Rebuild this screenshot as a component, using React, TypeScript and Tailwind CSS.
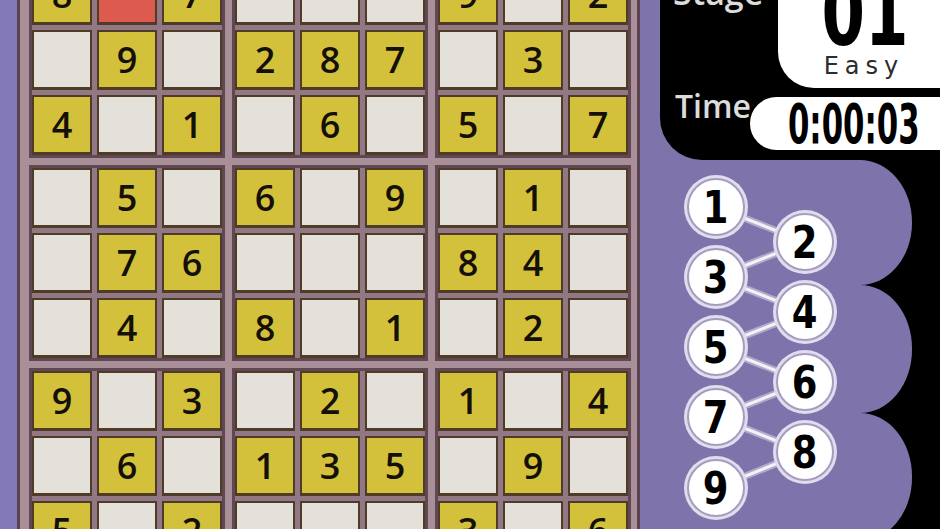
import React from 'react';

// '.' = empty cell, 'r' = selected (red) cell
const PUZZLE = [
  '8r7...9.2',
  '.9.287.3.',
  '4.1.6.5.7',
  '.5.6.9.1.',
  '.76...84.',
  '.4.8.1.2.',
  '9.3.2.1.4',
  '.6.135.9.',
  '5.2...3.6',
];

const PAD = [
  { n: 1, x: 76, y: 47 },
  { n: 2, x: 165, y: 82 },
  { n: 3, x: 76, y: 117 },
  { n: 4, x: 165, y: 152 },
  { n: 5, x: 76, y: 187 },
  { n: 6, x: 165, y: 222 },
  { n: 7, x: 76, y: 257 },
  { n: 8, x: 165, y: 292 },
  { n: 9, x: 76, y: 328 },
];

function Cell({ v }: { v: string }) {
  const base =
    'w-[60px] h-[60px] border-2 border-b-[3px] border-[#4e3c27] flex items-center justify-center text-[36px] font-semibold text-[#141008] leading-none font-["Open_Sans",sans-serif]';
  if (v === 'r') return <div className={`${base} bg-[#dc5a4e]`} />;
  if (v === '.') return <div className={`${base} bg-[#e3e1d9]`} />;
  return <div className={`${base} bg-[#d3c13c]`}>{v}</div>;
}

function Box({ br, bc }: { br: number; bc: number }) {
  const cells: string[] = [];
  for (let r = 0; r < 3; r++) {
    for (let c = 0; c < 3; c++) {
      cells.push(PUZZLE[br * 3 + r][bc * 3 + c]);
    }
  }
  return (
    <div className="border-[3px] border-[#5f4753] bg-[#927785] grid grid-cols-3 gap-[5px]">
      {cells.map((v, i) => (
        <Cell key={i} v={v} />
      ))}
    </div>
  );
}

function Board() {
  return (
    <div className="w-[623px] h-full overflow-hidden bg-[#a98f98] border-l-[3px] border-r-[3px] border-[#5a4250] pl-[9px] pr-[6px]">
      <div className="-mt-[38px] grid grid-cols-3 gap-[7px]">
        {Array.from({ length: 9 }).map((_, i) => (
          <Box key={i} br={Math.floor(i / 3)} bc={i % 3} />
        ))}
      </div>
    </div>
  );
}

function NumberPad() {
  return (
    <div className="absolute inset-0">
      <svg className="absolute inset-0" width="300" height="369">
        {PAD.slice(1).map((p, i) => (
          <line
            key={`o${i}`}
            x1={PAD[i].x}
            y1={PAD[i].y}
            x2={p.x}
            y2={p.y}
            stroke="#b3aacb"
            strokeWidth="7"
          />
        ))}
        {PAD.slice(1).map((p, i) => (
          <line
            key={`i${i}`}
            x1={PAD[i].x}
            y1={PAD[i].y}
            x2={p.x}
            y2={p.y}
            stroke="#f4f2f8"
            strokeWidth="3"
          />
        ))}
      </svg>
      {PAD.map((p) => (
        <div
          key={p.n}
          className="absolute w-[64px] h-[64px] rounded-full bg-[#e2ddee] p-[3px]"
          style={{ left: p.x - 32, top: p.y - 32 }}
        >
          <div className="w-full h-full rounded-full border-2 border-[#a59cc0] bg-white flex items-center justify-center">
            <span className="inline-block text-[45px] font-bold leading-none text-black scale-x-[0.82]">
              {p.n}
            </span>
          </div>
        </div>
      ))}
    </div>
  );
}

function SidePanel() {
  return (
    <div className="w-[300px] h-full bg-[#7f73ab] flex flex-col">
      {/* Stage / Time block */}
      <div className="ml-[20px] h-[160px] shrink-0 bg-black rounded-bl-[42px] flex flex-col">
        <div className="flex h-[88px]">
          <div className="flex-1 overflow-hidden pl-[13px]">
            <div className="-mt-[25px] text-[34px] font-semibold leading-none text-[#dcdcdc] font-['Open_Sans',sans-serif]">
              Stage
            </div>
          </div>
          <div className="w-[162px] h-[88px] bg-white rounded-bl-[36px] flex flex-col items-center overflow-hidden">
            <div className="-mt-[23px] h-[74px] flex justify-center pl-[12px]">
              <span className="inline-block text-[92px] font-bold leading-[0.8] text-black scale-x-[0.68] origin-center">
                01
              </span>
            </div>
            <div className="mt-[3px] pl-[10px] text-[24px] leading-none text-[#2c2c2c] tracking-[6px]">
              Easy
            </div>
          </div>
        </div>
        <div className="flex mt-[9px] h-[53px]">
          <div className="w-[90px] pl-[15px] -mt-[7px] text-[32px] font-semibold leading-none text-[#dcdcdc] font-['Open_Sans',sans-serif]">
            Time
          </div>
          <div className="flex-1 bg-white rounded-l-full flex items-center justify-center pl-[18px] overflow-hidden">
            <span className="inline-block text-[56px] font-bold leading-none text-black scale-x-[0.55] origin-center">
              0:00:03
            </span>
          </div>
        </div>
      </div>
      {/* scalloped number pad area */}
      <div className="relative flex-1 bg-black flex flex-col">
        <div className="w-[272px] h-[125px] shrink-0 bg-[#7f73ab] rounded-r-[52px_62px]" />
        <div className="w-[272px] h-[128px] shrink-0 bg-[#7f73ab] rounded-r-[52px_63px]" />
        <div className="w-[272px] h-[128px] shrink-0 bg-[#7f73ab] rounded-r-[52px_63px]" />
        <NumberPad />
      </div>
    </div>
  );
}

export default function App() {
  return (
    <div className="w-[940px] h-[529px] overflow-hidden flex bg-[#7f73ab] font-['DejaVu_Sans',sans-serif]">
      <div className="w-[17px] h-full bg-[#8479b8]" />
      <Board />
      <SidePanel />
    </div>
  );
}
